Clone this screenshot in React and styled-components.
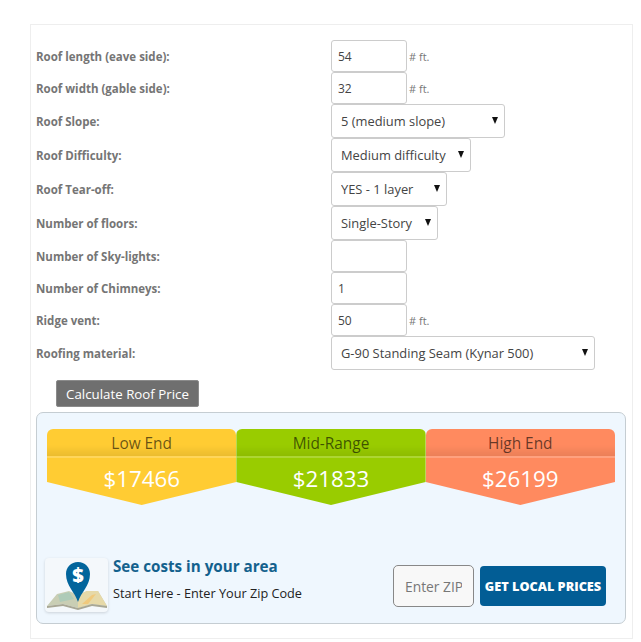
import React from 'react';
import styled, { createGlobalStyle } from 'styled-components';

const GlobalStyle = createGlobalStyle`
  html, body {
    margin: 0;
    padding: 0;
    background: #fff;
    font-family: "Open Sans", "Liberation Sans", sans-serif;
  }
`;

const fields = [
  { label: 'Roof length (eave side):', value: '54', unit: '# ft.' },
  { label: 'Roof width (gable side):', value: '32', unit: '# ft.' },
  { label: 'Roof Slope:', options: '5 (medium slope)', width: 174 },
  { label: 'Roof Difficulty:', options: 'Medium difficulty', width: 140 },
  { label: 'Roof Tear-off:', options: 'YES - 1 layer', width: 116 },
  { label: 'Number of floors:', options: 'Single-Story', width: 107 },
  { label: 'Number of Sky-lights:', value: '' },
  { label: 'Number of Chimneys:', value: '1' },
  { label: 'Ridge vent:', value: '50', unit: '# ft.' },
  { label: 'Roofing material:', options: 'G-90 Standing Seam (Kynar 500)', width: 264 },
];

const tiers = [
  { name: 'Low End', price: '$17466', color: '#ffcc33' },
  { name: 'Mid-Range', price: '$21833', color: '#99cc00' },
  { name: 'High End', price: '$26199', color: '#ff8a5f' },
];

const MapIcon = () => (
  <svg width="63" height="54" viewBox="0 0 63 54">
    <path d="M2 48 L12 36 L24 33 L33 37 L42 33 L53 33 L62 48 L47 46 L33 50 L18 46 Z" fill="#c9ceb4" />
    <path d="M33 37 L42 33 L53 33 L62 48 L47 46 L33 50 Z" fill="#e6d9a8" />
    <path d="M13 37 L24 34 L29 41 L15 44 Z" fill="#aecbb8" />
    <path d="M37 46 L47 37 L51 36 L43 46 Z" fill="#f0c97c" />
    <path d="M2 48 L18 46 L33 50 L47 46 L62 48 L62 50 L47 48 L33 52 L18 48 L2 50 Z" fill="#a8a794" />
    <path d="M33 44 C30 34 21 28 21 16 C21 9 26 4 33 4 C40 4 45 9 45 16 C45 28 36 34 33 44 Z" fill="#02659c" />
    <text x="33" y="24" textAnchor="middle" fontFamily="Open Sans" fontWeight="800" fontSize="20" fill="#fff">$</text>
  </svg>
);

const App = () => (
  <>
    <GlobalStyle />
    <Card>
      <Form>
        {fields.map((field) => (
          <Row key={field.label}>
            <Label>{field.label}</Label>
            {field.options ? (
              <SelectWrap $width={field.width}>
                <Select defaultValue={field.options}>
                  <option>{field.options}</option>
                </Select>
              </SelectWrap>
            ) : (
              <>
                <Input type="text" defaultValue={field.value} />
                {field.unit && <Unit>{field.unit}</Unit>}
              </>
            )}
          </Row>
        ))}
      </Form>
      <CalcButton type="button">Calculate Roof Price</CalcButton>
      <Panel>
        <Tiers>
          {tiers.map((tier) => (
            <Tier key={tier.name} $color={tier.color}>
              <TierName>{tier.name}</TierName>
              <TierPrice>{tier.price}</TierPrice>
            </Tier>
          ))}
        </Tiers>
        <Local>
          <IconBox>
            <MapIcon />
          </IconBox>
          <LocalText>
            <LocalTitle>See costs in your area</LocalTitle>
            <LocalSub>Start Here - Enter Your Zip Code</LocalSub>
          </LocalText>
          <ZipInput type="text" placeholder="Enter ZIP" />
          <PricesButton type="button">GET LOCAL PRICES</PricesButton>
        </Local>
      </Panel>
    </Card>
  </>
);

const Card = styled.div`
  box-sizing: border-box;
  width: 603px;
  height: 615px;
  margin: 24px 0 0 30px;
  padding: 15px 5px 0;
  border: 1px solid #eee;
`;

const Form = styled.div`
  display: flex;
  flex-direction: column;
`;

const Row = styled.div`
  display: flex;
  align-items: center;
`;

const Label = styled.div`
  width: 295px;
  font-size: 11.5px;
  font-weight: 700;
  color: #757575;
`;

const Input = styled.input`
  box-sizing: border-box;
  width: 76px;
  height: 32px;
  padding: 0 6px;
  border: 1px solid #ccc;
  border-radius: 3px;
  font-family: inherit;
  font-size: 12px;
  color: #444;
  outline: none;
`;

const Unit = styled.span`
  margin-left: 2px;
  font-size: 11px;
  color: #777;
`;

const SelectWrap = styled.div`
  position: relative;
  width: ${(p) => p.$width}px;
  height: 34px;

  &::after {
    content: '';
    position: absolute;
    top: 13px;
    right: 7px;
    border-left: 3px solid transparent;
    border-right: 3px solid transparent;
    border-top: 7px solid #111;
  }
`;

const Select = styled.select`
  appearance: none;
  box-sizing: border-box;
  width: 100%;
  height: 100%;
  padding: 0 9px;
  background: #fff;
  border: 1px solid #ccc;
  border-radius: 3px;
  font-family: inherit;
  font-size: 12.9px;
  color: #444;
  outline: none;
`;

const CalcButton = styled.button`
  display: block;
  width: 143px;
  height: 27px;
  margin: 10px 0 5px 20px;
  padding: 0;
  background: #6f6f6f;
  border: 1px solid #8b8b8b;
  border-radius: 2px;
  font-family: inherit;
  font-size: 13.3px;
  color: #fff;
`;

const Panel = styled.div`
  box-sizing: border-box;
  width: 590px;
  height: 212px;
  padding: 16px 10px 0;
  background: #eff7fe;
  border: 1px solid #c5cdd2;
  border-radius: 7px;
`;

const Tiers = styled.div`
  display: grid;
  grid-template-columns: repeat(3, 1fr);
`;

const Tier = styled.div`
  height: 76px;
  background: ${(p) => p.$color};
  border-radius: 6px 6px 0 0;
  text-align: center;
  clip-path: polygon(0 0, 100% 0, 100% 53px, 50% 100%, 0 53px);
`;

const TierName = styled.div`
  box-sizing: border-box;
  height: 29px;
  padding-top: 3px;
  border-bottom: 2px solid rgba(255, 255, 255, 0.2);
  background: linear-gradient(rgba(0, 0, 0, 0) 60%, rgba(0, 0, 0, 0.08));
  font-size: 15.4px;
  line-height: 24px;
  color: rgba(0, 0, 0, 0.6);
`;

const TierPrice = styled.div`
  padding-top: 6px;
  font-size: 22.3px;
  line-height: 30px;
  color: #fff;
`;

const Local = styled.div`
  display: flex;
  align-items: flex-start;
  margin-top: 53px;
`;

const IconBox = styled.div`
  flex: none;
  box-sizing: border-box;
  width: 63px;
  height: 54px;
  margin-left: -2px;
  background: #f4f8fb;
  border-radius: 4px;
  box-shadow: 0 1px 3px rgba(0, 0, 0, 0.15);
`;

const LocalText = styled.div`
  width: 280px;
  margin: -3px 0 0 5px;
`;

const LocalTitle = styled.div`
  font-size: 15.2px;
  font-weight: 700;
  line-height: 22px;
  color: #13618d;
`;

const LocalSub = styled.div`
  margin-top: 7px;
  font-size: 12.7px;
  line-height: 18px;
  color: #222;
`;

const ZipInput = styled.input`
  box-sizing: border-box;
  width: 81px;
  height: 42px;
  margin-top: 7px;
  padding: 0 11px;
  background: #f8f8f8;
  border: 1px solid #888;
  border-radius: 5px;
  font-family: inherit;
  font-size: 13.8px;
  outline: none;

  &::placeholder {
    color: #777;
  }
`;

const PricesButton = styled.button`
  width: 126px;
  height: 40px;
  margin: 8px 0 0 6px;
  padding: 0;
  background: #025d95;
  border: none;
  border-radius: 4px;
  font-family: inherit;
  font-size: 12.7px;
  font-weight: 800;
  color: #fff;
  white-space: nowrap;
`;

export default App;
